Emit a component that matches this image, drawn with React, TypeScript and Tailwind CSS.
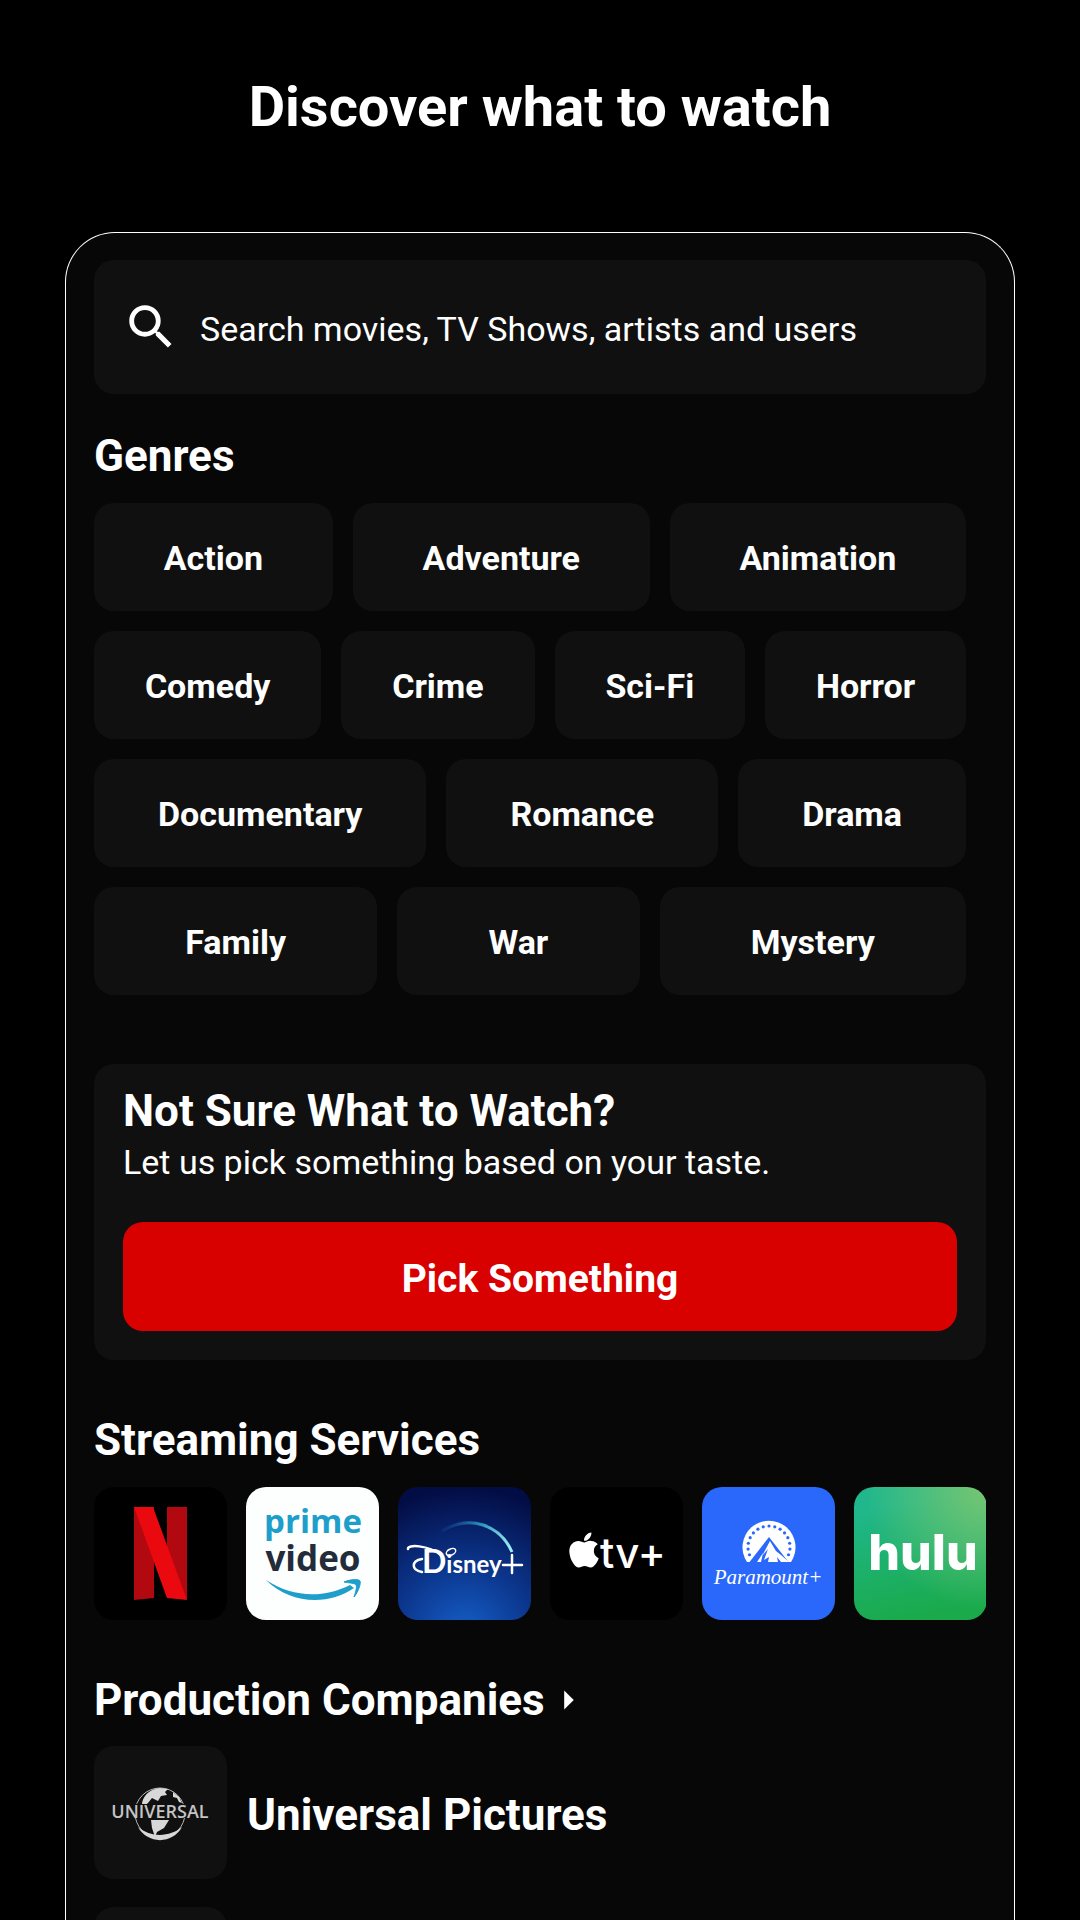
import { MdSearch, MdArrowRight } from "react-icons/md";
import { FaApple } from "react-icons/fa";

const genreRows = [
  ["Action", "Adventure", "Animation"],
  ["Comedy", "Crime", "Sci-Fi", "Horror"],
  ["Documentary", "Romance", "Drama"],
  ["Family", "War", "Mystery"],
];

function NetflixLogo() {
  return (
    <svg viewBox="0 0 133 133" className="size-full">
      <path d="M40 20h20v91l-20 2z" fill="#b1090f" />
      <path d="M73 20h20v93l-20-40z" fill="#b1090f" />
      <path d="M40 20h19l34 93-20-2z" fill="#e9090f" />
    </svg>
  );
}

function PrimeLogo() {
  return (
    <svg viewBox="0 0 133 133" className="size-full font-['Open_Sans',sans-serif] font-bold">
      <text x="67" y="46" textAnchor="middle" fontSize="33" fill="#1e9fcb">prime</text>
      <text x="67" y="84" textAnchor="middle" fontSize="35" fill="#232c3a">video</text>
      <path d="M20 93c26 17 56 19 84 5l4 3c-26 18-64 16-88-8z" fill="#1e9fcb" />
      <path d="M98 95c7-3 15-3 16-1s-1 10-6 16c3-9 3-12 1-13s-6-1-11-2z" fill="#1e9fcb" stroke="#1e9fcb" strokeWidth="1" />
    </svg>
  );
}

function DisneyLogo() {
  return (
    <svg viewBox="0 0 133 133" className="size-full">
      <defs>
        <linearGradient id="disney-arc" x1="0" x2="1">
          <stop offset="0" stopColor="#1b4fa8" stopOpacity="0.2" />
          <stop offset="0.6" stopColor="#2f9fc4" />
          <stop offset="1" stopColor="#9ff0f0" />
        </linearGradient>
      </defs>
      <path d="M44 44c28-17 58-6 70 21" fill="none" stroke="url(#disney-arc)" strokeWidth="3" />
      <text x="24" y="86" fill="#fff" className="font-['Lato',sans-serif] font-bold">
        <tspan fontSize="32">D</tspan>
        <tspan fontSize="24">isney</tspan>
      </text>
      <g fill="none" stroke="#fff" strokeLinecap="round" strokeWidth="2.500">
        <path d="M10 62c-1-5 20-4 33 6" />
        <path d="M24 72c-11 2-11 11 0 13" />
        <ellipse cx="53" cy="65" rx="5" ry="3" transform="rotate(-25 53 65)" strokeWidth="1.500" />
        <path d="M114 68v18M105 78h19" />
      </g>
    </svg>
  );
}

function AppleTvLogo() {
  return (
    <svg viewBox="0 0 133 133" className="size-full font-['Inter',sans-serif] font-medium" fill="#fff">
      <FaApple x="14" y="43" size={40} />
      <text x="50" y="81" fontSize="42">tv+</text>
    </svg>
  );
}

function ParamountLogo() {
  const dots = Array.from({ length: 15 }, (_, i) => Math.PI * (-0.12 + (i * 1.24) / 14));
  return (
    <svg viewBox="0 0 133 133" className="size-full">
      <path d="M45 75a26.500 26.500 0 1 1 44 0z" fill="#fff" />
      {dots.map((a, i) => (
        <circle key={i} cx={67 - 21 * Math.cos(a)} cy={60 - 21 * Math.sin(a)} r="1.600" fill="#2a68fb" />
      ))}
      <path d="M67 50 46 77h42z" fill="#2a68fb" />
      <path d="m68 54 6 10 5 4 8 7h-8l-4-5 1 5H66l1-5-5 3 4-11-6 7z" fill="#fff" />
      <path d="m61 66-6 9h4z" fill="#fff" />
      <text x="66" y="97" textAnchor="middle" fontSize="21" fontStyle="italic" fill="#fff" className="font-['Liberation_Serif',serif]">
        Paramount+
      </text>
    </svg>
  );
}

function HuluLogo() {
  return (
    <svg viewBox="0 0 133 133" className="size-full font-['Inter',sans-serif] font-extrabold">
      <text x="69" y="83" textAnchor="middle" fontSize="50" fill="#fff">hulu</text>
    </svg>
  );
}

function UniversalLogo() {
  return (
    <svg viewBox="0 0 133 133" className="size-full">
      <circle cx="66" cy="67" r="25" fill="none" stroke="#b5b5b5" />
      <path d="M48 57c2-9 9-14 18-15l8 1-3 3 2 3-6 1-3 5-6-3-4 5-5 4zM79 46l6 5 3 6-3-1-2-4-4-1z" fill="#d8d8d8" />
      <path d="M57 74h18l-5 8-7 4-2 5-3-9z" fill="#d8d8d8" />
      <path d="M44 81a25 25 0 0 0 44 0c-12 10-31 11-44 0z" fill="#d8d8d8" />
      <path d="M16 58h100v14H16z" fill="#101010" />
      <text x="66" y="72" textAnchor="middle" fontSize="18" fill="#c4c4c4" className="font-['Open_Sans',sans-serif] font-semibold">
        UNIVERSAL
      </text>
    </svg>
  );
}

const services = [
  { name: "Netflix", logo: <NetflixLogo />, bg: "bg-black" },
  { name: "Prime Video", logo: <PrimeLogo />, bg: "bg-[#fdfefe]" },
  { name: "Disney+", logo: <DisneyLogo />, bg: "bg-[radial-gradient(circle_at_50%_110%,#155fc8_0%,#0c3890_40%,#030d45_90%)]" },
  { name: "Apple TV+", logo: <AppleTvLogo />, bg: "bg-black" },
  { name: "Paramount+", logo: <ParamountLogo />, bg: "bg-[#2a68fb]" },
  { name: "Hulu", logo: <HuluLogo />, bg: "bg-[radial-gradient(circle_at_100%_0%,#78c671_0%,transparent_65%),linear-gradient(170deg,#20b78c_15%,#1aaa4c_90%)]" },
];

export default function App() {
  return (
    <div className="flex h-screen flex-col overflow-hidden bg-black px-[65px] font-['Roboto',sans-serif] text-white">
      <h1 className="pt-[73px] pb-[91px] text-center text-[56px] leading-[68px] font-bold">Discover what to watch</h1>

      <main className="flex-1 overflow-hidden rounded-t-[50px] border border-b-0 border-white bg-[#070707] px-7 pt-[27px]">
        <label className="flex h-[134px] items-center gap-5 rounded-[20px] bg-[#101010] px-7">
          <MdSearch className="size-[58px] shrink-0" />
          <input
            type="search"
            aria-label="Search"
            placeholder="Search movies, TV Shows, artists and users"
            className="min-w-0 flex-1 bg-transparent pt-1 text-[34px] leading-10 outline-none placeholder:text-white"
          />
        </label>

        <section>
          <h2 className="pt-9 pb-[21px] text-[44px] leading-[52px] font-bold">Genres</h2>
          <div className="mr-5 flex flex-col gap-5">
            {genreRows.map((row) => (
              <div key={row[0]} className="flex gap-5">
                {row.map((genre) => (
                  <button key={genre} className="h-[108px] flex-auto rounded-[20px] bg-[#101010] pt-[2px] text-[34px] leading-10 font-bold">
                    {genre}
                  </button>
                ))}
              </div>
            ))}
          </div>
        </section>

        <section className="mt-[69px] rounded-[20px] bg-[#101010] px-[29px] pt-[21px] pb-[29px]">
          <h2 className="text-[44px] leading-[52px] font-bold">Not Sure What to Watch?</h2>
          <p className="text-[34px] leading-[50px]">Let us pick something based on your taste.</p>
          <button className="mt-[35px] h-[109px] w-full rounded-[20px] bg-[#d90000] pt-1 text-[39px] leading-[52px] font-bold">Pick Something</button>
        </section>

        <section>
          <h2 className="pt-[54px] pb-[21px] text-[44px] leading-[52px] font-bold">Streaming Services</h2>
          <div className="flex gap-[19px] overflow-hidden">
            {services.map((service) => (
              <button key={service.name} aria-label={service.name} className={`size-[133px] shrink-0 overflow-hidden rounded-[20px] ${service.bg}`}>
                {service.logo}
              </button>
            ))}
          </div>
        </section>

        <section>
          <h2 className="flex items-center pt-[54px] pb-5 text-[44px] leading-[52px] font-bold">
            Production Companies
            <MdArrowRight className="size-[46px]" />
          </h2>
          <div className="flex flex-col gap-7">
            <a href="#universal" className="flex items-center gap-5">
              <span className="size-[133px] rounded-[20px] bg-[#101010]">
                <UniversalLogo />
              </span>
              <span className="pt-1 text-[44px] leading-[52px] font-bold">Universal Pictures</span>
            </a>
            <div className="size-[133px] rounded-[20px] bg-[#101010]" />
          </div>
        </section>
      </main>
    </div>
  );
}
